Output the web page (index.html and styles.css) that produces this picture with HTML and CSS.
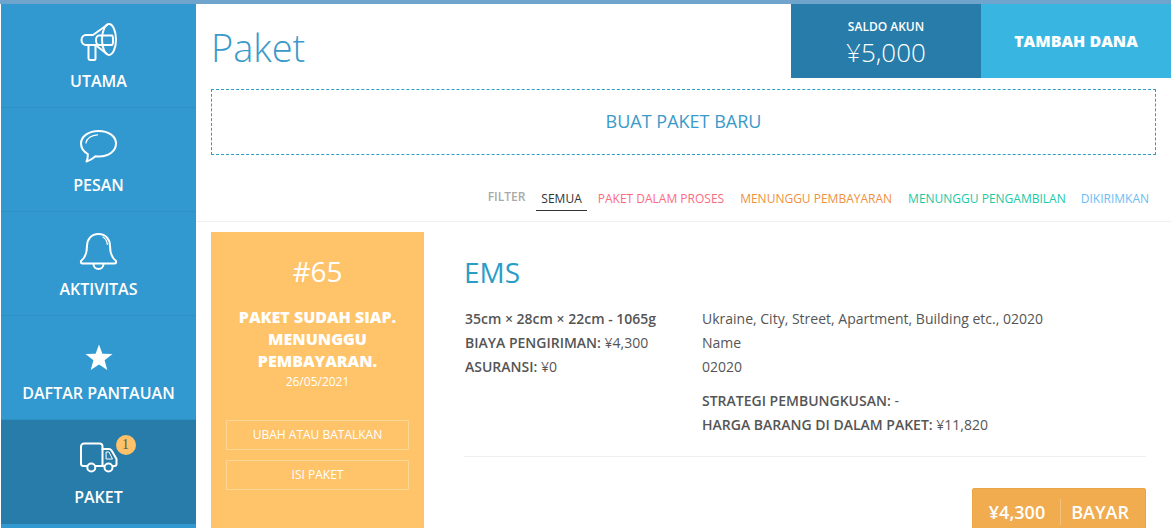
FILE: index.html
```html
<!DOCTYPE html>
<html lang="id">
<head>
    <meta charset="UTF-8">
    <meta name="viewport" content="width=device-width, initial-scale=1.0">
    <title>Paket</title>
    <link rel="stylesheet" href="styles.css">
</head>
<body>
    <div class="topline"></div>
    <div class="layout">
        <nav class="sidebar">
            <a class="nav-item">
                <svg class="nav-icon" width="40" height="40" viewBox="0 0 40 40" fill="none" stroke="#fff" stroke-width="2" stroke-linecap="round" stroke-linejoin="round">
                    <ellipse cx="30" cy="16.500" rx="7" ry="15.500"/>
                    <path d="M28 2 L14 12 H7 a4.500 5 0 0 0 0 10 H16.500 L28 31"/>
                    <path d="M20 12.500 H33 a1 4.500 0 0 1 0 9.500 H20 a3 4.750 0 0 1 0 -9.500 Z"/>
                    <path d="M9.500 22 V35 a2 2 0 0 0 2 2 H15 a1.500 1.500 0 0 0 1.500 -1.500 V22"/>
                </svg>
                <span>UTAMA</span>
            </a>
            <a class="nav-item">
                <svg class="nav-icon" width="40" height="40" viewBox="0 0 40 40" fill="none" stroke="#fff" stroke-width="2" stroke-linecap="round" stroke-linejoin="round">
                    <path d="M19.500 4 C30 4 37 9.500 37 16.500 C37 24 30 29.500 20 29.500 C18.500 29.500 17.500 29.400 16.500 29.300 C14 31.500 11.500 33.500 7.500 34.500 C8.500 32.500 9 30 8.800 27 C4.500 24.500 2 21 2 16.500 C2 9.500 9.500 4 19.500 4 Z"/>
                    <path d="M7 16 C7.500 11.500 12.500 8 18.500 7.800" stroke-width="1.200"/>
                </svg>
                <span>PESAN</span>
            </a>
            <a class="nav-item">
                <svg class="nav-icon" width="40" height="40" viewBox="0 0 40 40" fill="none" stroke="#fff" stroke-width="2" stroke-linecap="round" stroke-linejoin="round">
                    <path d="M19.500 3 C27 3 31 8.500 31 15 C31 23 33 27 37 30 Q37.500 32.500 35.500 32.500 H3.500 Q1.500 32.500 2 30 C6 27 8 23 8 15 C8 8.500 12 3 19.500 3 Z"/>
                    <path d="M14.500 33 a5 5 0 0 0 10 0"/>
                    <path d="M24 6 C26.500 7.500 28 10 28.300 13.500" stroke-width="1.200"/>
                </svg>
                <span>AKTIVITAS</span>
            </a>
            <a class="nav-item">
                <svg class="nav-icon" width="40" height="40" viewBox="0 0 40 40">
                    <path fill="#fff" d="M20 9.500 L23.400 18.800 L33.500 19 L25.600 25.300 L28.300 35 L20 29.500 L11.700 35 L14.400 25.300 L6.500 19 L16.600 18.800 Z"/>
                </svg>
                <span>DAFTAR PANTAUAN</span>
            </a>
            <a class="nav-item active">
                <span class="nav-icon-wrap">
                    <svg class="nav-icon" width="40" height="40" viewBox="0 0 40 40" fill="none" stroke="#fff" stroke-width="2" stroke-linecap="round" stroke-linejoin="round">
                        <path d="M7.500 27 H4.500 a2.500 2.500 0 0 1 -2.500 -2.500 V7.500 a3 3 0 0 1 3 -3 H20.500 a3 3 0 0 1 3 3 V27 H17"/>
                        <path d="M23.500 10 H30 C31.500 10 32.500 11 33.500 13 L37.500 20 V25 a2 2 0 0 1 -2 2 H34.500"/>
                        <path d="M23.500 27 H24.500"/>
                        <path d="M27.500 13 H30 L33.500 20 H27.500 Z" stroke-width="1"/>
                        <circle cx="12.300" cy="28.500" r="4"/>
                        <circle cx="29.500" cy="28.500" r="4"/>
                    </svg>
                    <span class="badge">1</span>
                </span>
                <span>PAKET</span>
            </a>
            <a class="nav-item"></a>
        </nav>

        <main class="content">
            <header class="head">
                <h1 class="title">Paket</h1>
                <div class="saldo">
                    <div class="saldo-label">SALDO AKUN</div>
                    <div class="saldo-value">¥5,000</div>
                </div>
                <a class="tambah">TAMBAH DANA</a>
            </header>

            <a class="new-package">BUAT PAKET BARU</a>

            <div class="filters">
                <span class="filter-label">FILTER</span>
                <a class="filter current">SEMUA</a>
                <a class="filter red">PAKET DALAM PROSES</a>
                <a class="filter orange">MENUNGGU PEMBAYARAN</a>
                <a class="filter green">MENUNGGU PENGAMBILAN</a>
                <a class="filter blue">DIKIRIMKAN</a>
            </div>

            <section class="package">
                <div class="status-card">
                    <div class="status-number">#65</div>
                    <div class="status-text">PAKET SUDAH SIAP. MENUNGGU PEMBAYARAN.</div>
                    <div class="status-date">26/05/2021</div>
                    <a class="status-btn first">UBAH ATAU BATALKAN</a>
                    <a class="status-btn">ISI PAKET</a>
                </div>
                <div class="details">
                    <h2 class="carrier">EMS</h2>
                    <div class="columns">
                        <div class="col-left">
                            <p><b>35cm × 28cm × 22cm - 1065g</b></p>
                            <p><b>BIAYA PENGIRIMAN:</b> ¥4,300</p>
                            <p><b>ASURANSI:</b> ¥0</p>
                        </div>
                        <div class="col-right">
                            <p>Ukraine, City, Street, Apartment, Building etc., 02020</p>
                            <p>Name</p>
                            <p>02020</p>
                            <p class="gap"><b>STRATEGI PEMBUNGKUSAN:</b> -</p>
                            <p><b>HARGA BARANG DI DALAM PAKET:</b> ¥11,820</p>
                        </div>
                    </div>
                    <div class="pay-row">
                        <a class="pay"><span class="pay-price">¥4,300</span><span class="pay-label">BAYAR</span></a>
                    </div>
                </div>
            </section>
        </main>
    </div>
</body>
</html>
```

FILE: styles.css
```css
html, body {
    height: 100%;
}

body {
    margin: 0;
    background-color: #ffffff;
    color: #555555;
    font-family: 'Open Sans', sans-serif;
    overflow: hidden;
}

.topline {
    height: 4px;
    background-color: #6fa5cc;
}

.layout {
    display: flex;
    padding-left: 1px;
}

/* menu kiri */
.sidebar {
    flex: 0 0 195px;
    background-color: #3299d0;
}

.nav-item {
    display: flex;
    flex-direction: column;
    align-items: center;
    box-sizing: border-box;
    height: 104px;
    padding-top: 19px;
    border-bottom: 1px solid #2f90c4;
    color: #ffffff;
    font-size: 16px;
    font-weight: 600;
    line-height: 22px;
}

.nav-item .nav-icon {
    display: block;
    margin-bottom: 7px;
}

.nav-item.active {
    background-color: #277ca9;
    border-bottom: none;
}

.nav-icon-wrap {
    position: relative;
    display: block;
}

.badge {
    position: absolute;
    top: -4px;
    left: 37px;
    width: 20px;
    height: 20px;
    border-radius: 50%;
    background-color: #ffc26a;
    color: #555555;
    font-family: 'Liberation Serif', serif;
    font-size: 14px;
    font-weight: 400;
    line-height: 20px;
    text-align: center;
}

/* isi */
.content {
    flex: 1;
    min-width: 0;
}

.head {
    display: flex;
    height: 74px;
    padding-left: 15px;
}

.title {
    flex: 1;
    margin: 0;
    color: #3a9ac9;
    font-size: 38px;
    font-weight: 300;
    line-height: 86px;
}

.saldo {
    width: 190px;
    background-color: #277ca9;
    color: #ffffff;
    text-align: center;
}

.saldo-label {
    margin-top: 14px;
    font-size: 12px;
    font-weight: 600;
    line-height: 18px;
}

.saldo-value {
    font-size: 26px;
    font-weight: 300;
    line-height: 32px;
}

.tambah {
    width: 190px;
    background-color: #39b5e2;
    color: #ffffff;
    font-size: 16px;
    font-weight: 800;
    line-height: 74px;
    text-align: center;
}

.new-package {
    display: block;
    margin: 11px 15px 0;
    height: 64px;
    border: 1px dashed #2aa0c4;
    color: #3a9ac9;
    font-size: 18px;
    line-height: 62px;
    text-align: center;
}

.filters {
    display: flex;
    justify-content: flex-end;
    align-items: flex-start;
    height: 44px;
    margin-top: 22px;
    padding-right: 17px;
    border-bottom: 1px solid #f0f0f0;
    font-size: 12px;
}

.filter-label {
    margin-right: 11px;
    padding-top: 11px;
    color: #a9a9a9;
    font-weight: 600;
    line-height: 18px;
}

.filter {
    padding: 13px 5px 2px;
    line-height: 18px;
}

.filter.current {
    color: #333333;
    border-bottom: 1px solid #333333;
}

.filter.red {
    margin-left: 6px;
    color: #fa6c7f;
}

.filter.orange {
    margin-left: 6px;
    color: #ee9140;
}

.filter.green {
    margin-left: 6px;
    color: #1cc9a4;
}

.filter.blue {
    margin-left: 5px;
    color: #6bbcf5;
}

/* kartu paket */
.package {
    display: flex;
    margin-top: 10px;
    padding: 0 25px 0 15px;
}

.status-card {
    flex: 0 0 213px;
    box-sizing: border-box;
    height: 310px;
    padding: 21px 15px 0;
    background-color: #ffc369;
    color: #ffffff;
    text-align: center;
}

.status-number {
    font-size: 28px;
    line-height: 36px;
}

.status-text {
    margin-top: 17px;
    font-size: 16px;
    font-weight: 800;
    line-height: 22px;
}

.status-date {
    margin-top: 2px;
    font-size: 12px;
    line-height: 16px;
}

.status-btn {
    display: block;
    height: 28px;
    border: 1px solid #ffd898;
    border-radius: 1px;
    font-size: 12px;
    line-height: 28px;
}

.status-btn.first {
    margin-top: 30px;
    margin-bottom: 10px;
}

.details {
    flex: 1;
    min-width: 0;
    padding-left: 40px;
}

.carrier {
    margin: 19px 0 0;
    color: #2a9dc7;
    font-size: 28px;
    font-weight: 400;
    line-height: 42px;
}

.columns {
    display: flex;
    padding: 14px 0 19px 1px;
    border-bottom: 1px solid #eeeeee;
    font-size: 14px;
    line-height: 24px;
}

.columns p {
    margin: 0;
}

.columns b {
    font-weight: 600;
}

.col-left {
    flex: 0 0 237px;
}

.col-right .gap {
    margin-top: 10px;
}

.pay-row {
    display: flex;
    justify-content: flex-end;
    margin-top: 31px;
}

.pay {
    display: flex;
    align-items: center;
    box-sizing: border-box;
    height: 48px;
    padding: 0 16px;
    background-color: #f0ac4e;
    border: 1px solid #eba544;
    border-radius: 2px;
    color: #ffffff;
    font-size: 18px;
    font-weight: 600;
}

.pay-price {
    padding-right: 15px;
    border-right: 1px solid #f5c07a;
    line-height: 26px;
}

.pay-label {
    padding-left: 10px;
}
```
